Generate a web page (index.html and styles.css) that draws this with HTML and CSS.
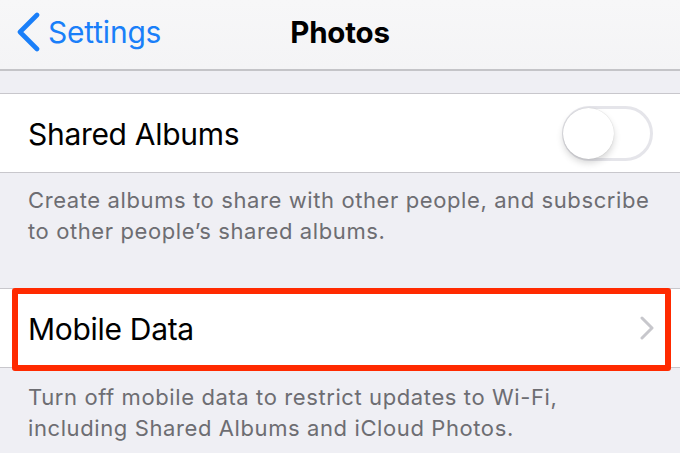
FILE: index.html
```html
<!DOCTYPE html>
<html lang="en">
<head>
<meta charset="utf-8">
<title>Photos</title>
<link rel="stylesheet" href="styles.css">
</head>
<body>
  <header class="nav">
    <div class="nav-back">
      <svg class="back-chevron" width="26" height="40" viewBox="0 0 26 40" aria-hidden="true">
        <path d="M21 3 L4 20 L21 37" fill="none" stroke="#1a7ff9" stroke-width="4.6" stroke-linecap="round" stroke-linejoin="round"/>
      </svg>
      <span class="back-label">Settings</span>
    </div>
    <h1 class="nav-title">Photos</h1>
    <div class="nav-spacer"></div>
  </header>

  <div class="band"></div>

  <section class="group">
    <div class="row">
      <span class="row-label">Shared Albums</span>
      <span class="switch"><span class="knob"></span></span>
    </div>
  </section>

  <p class="note note-first">Create albums to share with other people, and subscribe<br>to other people’s shared albums.</p>

  <section class="group group-marked">
    <div class="row">
      <span class="row-label">Mobile Data</span>
      <svg class="chevron" width="16" height="24" viewBox="0 0 16 24" aria-hidden="true">
        <path d="M3 2 L13 12 L3 22" fill="none" stroke="#c7c7cc" stroke-width="3" stroke-linecap="round" stroke-linejoin="round"/>
      </svg>
    </div>
    <div class="highlight"></div>
  </section>

  <p class="note note-last">Turn off mobile data to restrict updates to Wi-Fi,<br>including Shared Albums and iCloud Photos.</p>
</body>
</html>
```

FILE: styles.css
```css
html, body {
  margin: 0;
  padding: 0;
}

body {
  background: #efeff4;
  font-family: Inter, "Liberation Sans", Arial, sans-serif;
  width: 680px;
  height: 453px;
  overflow: hidden;
}

.nav {
  height: 71px;
  box-sizing: border-box;
  border-bottom: 2px solid #c4c4c8;
  background: linear-gradient(#f7f7f8, #f4f4f6);
  display: grid;
  grid-template-columns: 1fr auto 1fr;
  align-items: center;
  padding: 0 0 6px 0;
}

.nav-back {
  display: flex;
  align-items: center;
  padding-left: 16px;
  gap: 6px;
}

.back-label {
  color: #1a7ff9;
  font-size: 30px;
  letter-spacing: -0.2px;
}

.nav-title {
  margin: 0;
  font-size: 29.5px;
  font-weight: 700;
  color: #000;
  letter-spacing: -0.2px;
}

.band {
  height: 22px;
}

.group {
  background: #fff;
  border-top: 1px solid #c8c7cc;
  border-bottom: 1px solid #c8c7cc;
}

.row {
  height: 78px;
  display: flex;
  align-items: center;
  justify-content: space-between;
  padding: 0 27px 0 28px;
}

.row-label {
  font-size: 30px;
  color: #000;
  letter-spacing: -0.3px;
  padding-top: 2px;
}

.switch {
  position: relative;
  width: 91px;
  height: 55px;
  box-sizing: border-box;
  border: 3px solid #e5e5ea;
  border-radius: 28px;
  background: #fff;
}

.knob {
  position: absolute;
  left: -2px;
  top: -1px;
  width: 51px;
  height: 51px;
  border-radius: 50%;
  background: #fff;
  box-shadow: 0 4px 7px rgba(0, 0, 0, 0.16), 0 0 1px rgba(0, 0, 0, 0.2);
}

.chevron {
  margin-right: -2px;
}

.note {
  margin: 0;
  color: #6d6d72;
  font-size: 22px;
  line-height: 31px;
  letter-spacing: 0.6px;
  padding: 0 10px 0 28px;
  white-space: nowrap;
}

.note-first {
  height: 115px;
  box-sizing: border-box;
  padding-top: 12px;
}

.note-last {
  padding-top: 14px;
}

.group-marked {
  position: relative;
}

.highlight {
  position: absolute;
  left: 12px;
  right: 9px;
  top: -1px;
  bottom: -4px;
  border: 6px solid #ff2a00;
  border-radius: 3px;
}
```
